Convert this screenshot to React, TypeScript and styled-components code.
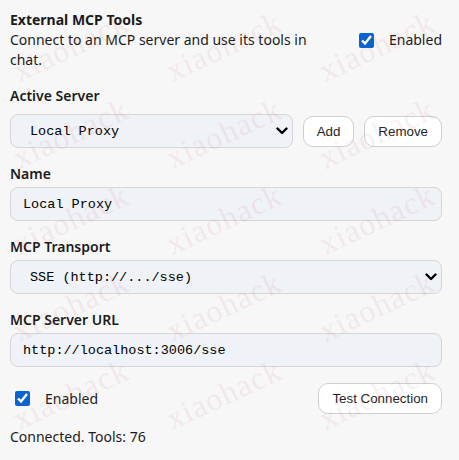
import React from 'react'
import styled, { createGlobalStyle, css } from 'styled-components'

const GlobalStyle = createGlobalStyle`
  html, body {
    margin: 0;
    padding: 0;
    background: #f7f7f7;
  }

  body {
    font-family: "Segoe UI", "Noto Sans", sans-serif;
    color: #1b1b1b;
  }
`

const Panel = styled.div`
  box-sizing: border-box;
  width: 452px;
  min-height: 460px;
  padding: 10px;
  display: flex;
  flex-direction: column;
  gap: 16px;
  background: #f7f7f7;
`

const Header = styled.div`
  display: flex;
  align-items: center;
  gap: 20px;
`

const HeaderText = styled.div`
  flex: 1;
  min-width: 0;
`

const Title = styled.div`
  font-weight: 700;
  font-size: 14px;
  line-height: 20px;
`

const Description = styled.div`
  max-width: 320px;
  font-size: 14px;
  line-height: 20px;
`

const ToggleLabel = styled.label<{ $inset?: number }>`
  display: flex;
  align-items: center;
  gap: 15px;
  padding-left: ${({ $inset }) => $inset ?? 0}px;
  font-size: 14px;
  line-height: 20px;
`

const Checkbox = styled.input.attrs({ type: 'checkbox' })`
  width: 15px;
  height: 15px;
  margin: 0;
  accent-color: #0b63ce;
`

const Field = styled.div<{ $gap?: number }>`
  display: flex;
  flex-direction: column;
  gap: ${({ $gap }) => $gap ?? 3}px;
`

const Label = styled.label`
  font-weight: 600;
  font-size: 14px;
  line-height: 20px;
`

const controlBase = css`
  box-sizing: border-box;
  height: 34px;
  border: 1px solid #d6d6d6;
  border-radius: 8px;
  background: #eff2f7;
  font-family: "Liberation Mono", monospace;
  font-size: 13.5px;
  color: #000;
  outline: none;
`

const TextInput = styled.input`
  ${controlBase};
  width: 100%;
  padding: 0 12px;
`

const SelectWrap = styled.div`
  position: relative;
  flex: 1;
  display: flex;
`

const Select = styled.select`
  ${controlBase};
  appearance: none;
  width: 100%;
  padding: 0 24px 0 19px;
`

const Chevron = styled.svg`
  position: absolute;
  right: 5px;
  top: 50%;
  margin-top: -4px;
  pointer-events: none;
`

const Row = styled.div<{ $spread?: boolean }>`
  display: flex;
  align-items: center;
  justify-content: ${({ $spread }) => ($spread ? 'space-between' : 'flex-start')};
  gap: 10px;
`

const Button = styled.button`
  height: 31px;
  padding: 0 13px;
  border: 1px solid #cfcfcf;
  border-radius: 10px;
  background: #fff;
  font-family: "Liberation Sans", Arial, sans-serif;
  font-size: 13.33px;
  color: #1f1f1f;
`

const Status = styled.div`
  margin-top: -3px;
  font-size: 14px;
  line-height: 20px;
`

const Watermark = styled.div`
  position: fixed;
  inset: 0;
  overflow: hidden;
  pointer-events: none;
`

const Mark = styled.span`
  position: absolute;
  font-family: "Liberation Serif", serif;
  font-size: 32px;
  letter-spacing: 1px;
  line-height: 26px;
  white-space: nowrap;
  color: rgba(210, 110, 125, 0.11);
  transform: rotate(-25deg);
  transform-origin: 0 100%;
`

const markColumns = [20, 173, 326]
const markRows = [80, 167, 253, 340, 428]

function SelectBox({ value, options }: { value: string; options: string[] }) {
  return (
    <SelectWrap>
      <Select defaultValue={value}>
        {options.map((o) => (
          <option key={o}>{o}</option>
        ))}
      </Select>
      <Chevron width="12" height="8" viewBox="0 0 12 8">
        <path d="M1.5 1.5 L6 6 L10.5 1.5" fill="none" stroke="#000" strokeWidth="2.4" strokeLinecap="round" strokeLinejoin="round" />
      </Chevron>
    </SelectWrap>
  )
}

export default function App() {
  return (
    <>
      <GlobalStyle />
      <Panel>
        <Header>
          <HeaderText>
            <Title>External MCP Tools</Title>
            <Description>Connect to an MCP server and use its tools in chat.</Description>
          </HeaderText>
          <ToggleLabel>
            <Checkbox defaultChecked />
            Enabled
          </ToggleLabel>
        </Header>

        <Field $gap={8}>
          <Label>Active Server</Label>
          <Row>
            <SelectBox value="Local Proxy" options={['Local Proxy']} />
            <Button>Add</Button>
            <Button>Remove</Button>
          </Row>
        </Field>

        <Field>
          <Label>Name</Label>
          <TextInput defaultValue="Local Proxy" />
        </Field>

        <Field>
          <Label>MCP Transport</Label>
          <Row>
            <SelectBox value="SSE (http://.../sse)" options={['SSE (http://.../sse)', 'Streamable HTTP', 'stdio']} />
          </Row>
        </Field>

        <Field>
          <Label>MCP Server URL</Label>
          <TextInput defaultValue="http://localhost:3006/sse" />
        </Field>

        <Row $spread>
          <ToggleLabel $inset={5}>
            <Checkbox defaultChecked />
            Enabled
          </ToggleLabel>
          <Button>Test Connection</Button>
        </Row>

        <Status>Connected. Tools: 76</Status>
      </Panel>

      <Watermark>
        {markRows.map((y) =>
          markColumns.map((x) => (
            <Mark key={`${x}-${y}`} style={{ left: x, top: y - 22 }}>
              xiaohack
            </Mark>
          ))
        )}
      </Watermark>
    </>
  )
}
